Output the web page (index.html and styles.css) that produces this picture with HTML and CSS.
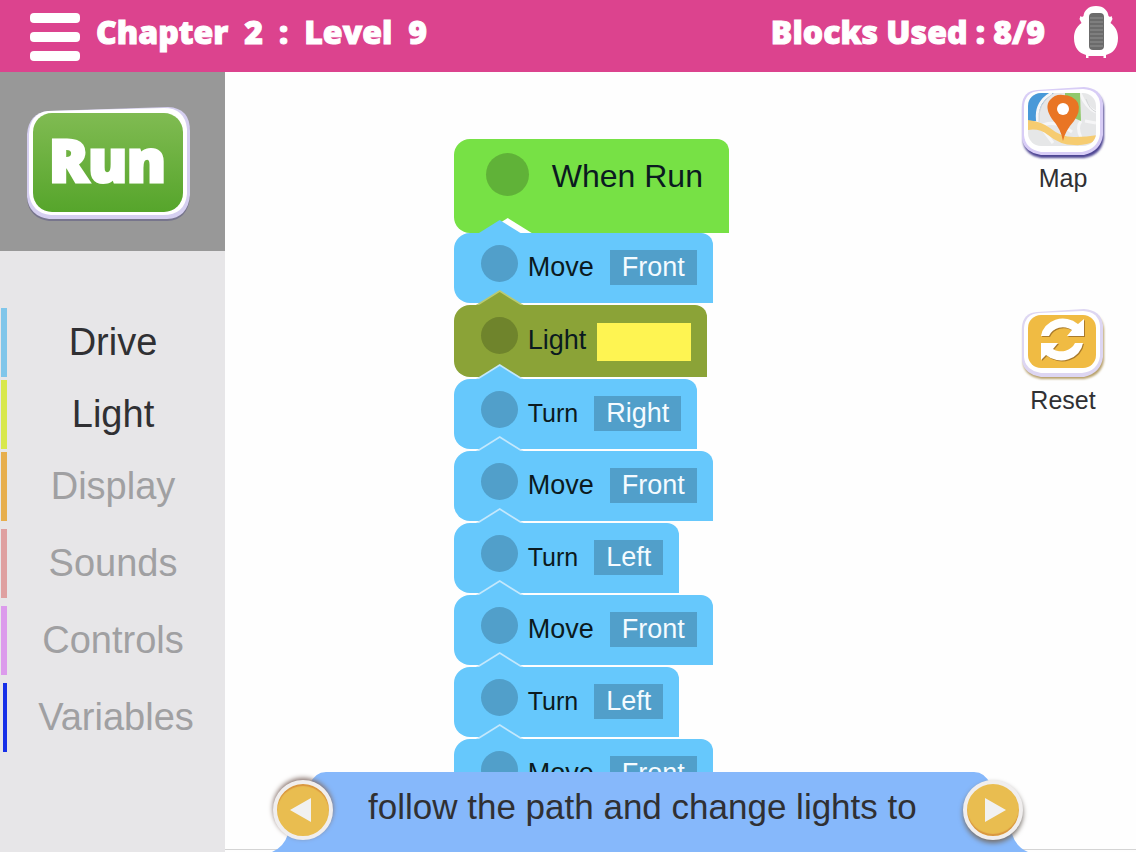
FILE: index.html
```html
<!doctype html>
<html lang="en">
<head>
<meta charset="UTF-8">
<meta name="viewport" content="width=device-width, initial-scale=1">
<title>Chapter 2 : Level 9</title>
<link rel="stylesheet" href="styles.css">
</head>

<body>
	<header class="topbar">
		<button class="menu" type="button" aria-label="Menu">
			<span></span><span></span><span></span>
		</button>
		<h1 class="level"><span>Chapter</span> <span>2</span> <span>:</span> <span>Level</span> <span>9</span></h1>
		<p class="used">Blocks Used : 8/9</p>
		<svg class="robot" viewBox="0 0 46 54" width="46" height="54" aria-hidden="true">
			<path d="M23 1C15 1 11 6 10.500 11L9 12L7.500 11L6.500 14L8.500 18C3 22 1 27 1 33C1 43 6 48 13 50V53H15.500V51H30.500V53H33V50C40 48 45 43 45 33C45 27 43 22 37.500 18L39.500 14L38.500 11L37 12L35.500 11C35 6 31 1 23 1Z" fill="#fff"/>
			<rect x="16" y="8" width="15" height="37" rx="4" fill="#6b6b6b"/>
			<path d="M17 13H30M17 17H30M17 21H30M17 25H30M17 29H30M17 33H30M17 37H30M17 41H30" stroke="#929292"/>
		</svg>
	</header>

	<div class="page">
		<aside class="sidebar">
			<div class="run-area">
				<button class="run" type="button">
					<svg viewBox="0 0 166 116" width="166" height="116" aria-hidden="true">
						<defs>
							<linearGradient id="runGreen" x1="0" y1="0" x2="0" y2="1">
								<stop offset="0" stop-color="#80bb52"/>
								<stop offset="1" stop-color="#56a52b"/>
							</linearGradient>
						</defs>
						<path d="M22 7L142 3Q164 4 164 27V91Q162 114 141 115H23Q3 112 1 93V30Q3 9 22 7Z" fill="#77758c"/>
						<path d="M22 5L142 1Q164 2 164 25V89Q162 112 141 113H23Q3 110 1 91V28Q3 7 22 5Z" fill="#d5cff0"/>
						<path d="M22 5L138 2Q159 2 161 23V88Q159 109 137 109H25Q5 107 3 87V28Q4 7 22 5Z" fill="#fff"/>
						<rect x="7" y="7" width="150" height="99" rx="19" fill="url(#runGreen)"/>
					</svg>
					<span>Run</span>
				</button>
			</div>
			<nav class="categories">
				<button class="category drive" type="button">Drive</button>
				<button class="category light" type="button">Light</button>
				<button class="category display" type="button" disabled>Display</button>
				<button class="category sounds" type="button" disabled>Sounds</button>
				<button class="category controls" type="button" disabled>Controls</button>
				<button class="category variables" type="button" disabled>Variables</button>
			</nav>
		</aside>

		<main class="workspace">
			<div class="canvas">
				<div class="blocks">
					<div class="block start"><span class="dot"></span><span class="name">When Run</span></div>
					<div class="block first"><span class="dot"></span><span class="name">Move</span><button class="value" type="button">Front</button></div>
					<div class="block lamp"><span class="dot"></span><span class="name">Light</span><button class="value" type="button" aria-label="Yellow"></button></div>
					<div class="block turn"><span class="dot"></span><span class="name">Turn</span><button class="value" type="button">Right</button></div>
					<div class="block"><span class="dot"></span><span class="name">Move</span><button class="value" type="button">Front</button></div>
					<div class="block turn"><span class="dot"></span><span class="name">Turn</span><button class="value" type="button">Left</button></div>
					<div class="block"><span class="dot"></span><span class="name">Move</span><button class="value" type="button">Front</button></div>
					<div class="block turn"><span class="dot"></span><span class="name">Turn</span><button class="value" type="button">Left</button></div>
					<div class="block"><span class="dot"></span><span class="name">Move</span><button class="value" type="button">Front</button></div>
				</div>

				<div class="tools">
					<button class="tool" type="button">
						<svg viewBox="0 0 88 76" width="88" height="76" aria-hidden="true">
							<defs>
								<clipPath id="mapArea"><rect x="9" y="8" width="68" height="53" rx="13"/></clipPath>
								<filter id="soft" x="-10%" y="-10%" width="120%" height="130%"><feGaussianBlur stdDeviation="1"/></filter>
							</defs>
							<path d="M18 9L65 5Q84 6 85 23V53Q83 70 65 73H22Q6 70 4 57V24Q5 10 18 9Z" fill="#4e4593" filter="url(#soft)"/>
							<path d="M18 5L65 2Q82 3 84 18V50Q82 66 65 70H22Q5 67 3 54V20Q4 6 18 5Z" fill="#d8cdf6"/>
							<path d="M20 6L64 4Q80 5 81 19V49Q79 64 63 67H22Q6 64 5 50V21Q6 7 20 6Z" fill="#fff"/>
							<g clip-path="url(#mapArea)">
								<path d="M9 8H77V61H9Z" fill="#e6e7e8"/>
								<path d="M9 8H35Q20 17 18 36H9Z" fill="#4999d8"/>
								<path d="M33 8Q15 18 19 38L34 58M61 8Q67 23 77 27M66 36L77 38M62 36Q57 42 62 53M19 43Q34 32 53 47" fill="none" stroke="#f6f6f7" stroke-width="3"/>
								<path d="M35 8Q18 18 20 37M67 14Q70 24 77 27" fill="none" stroke="#d4d6d8" stroke-width="1"/>
								<path d="M46 8H61L62 36Q52 32 46 27Z" fill="#91c96c"/>
								<path d="M9 35Q21 36 31 43Q43 53 57 52Q69 52 78 50V55Q67 61 55 60Q41 60 29 50Q20 43 9 45Z" fill="#f6cc71"/>
							</g>
							<path d="M44 56Q42 44 33 34Q25 22 31 15Q36 9 44 10Q54 10 59 18Q62 26 55 36Q46 46 44 56Z" fill="#e97524"/>
							<circle cx="44" cy="24" r="6" fill="#fff"/>
						</svg>
						<span>Map</span>
					</button>
					<button class="tool" type="button">
						<svg viewBox="0 0 88 76" width="88" height="76" aria-hidden="true">
							<path d="M18 9L65 5Q84 6 85 23V53Q83 69 65 72H22Q6 69 4 57V24Q5 10 18 9Z" fill="#b7a06b" filter="url(#soft)"/>
							<path d="M18 5L65 2Q82 3 84 18V50Q82 66 65 70H22Q5 67 3 54V20Q4 6 18 5Z" fill="#ddd6f2"/>
							<path d="M20 6L64 4Q80 5 81 19V49Q79 64 63 66H22Q6 63 5 50V21Q6 7 20 6Z" fill="#fff"/>
							<rect x="9" y="8" width="68" height="53" rx="13" fill="#f0bb43"/>
							<g transform="translate(1 1)" fill="#a97a2b">
								<path d="M22 29A22 20 0 0 1 59 17L65 12V29H48L53 23A15 14 0 0 0 30 29Z"/>
								<path d="M64 36A22 20 0 0 1 27 48L22 53V36H39L34 42A15 14 0 0 0 56 36Z"/>
							</g>
							<g fill="#fff">
								<path d="M22 29A22 20 0 0 1 59 17L65 12V29H48L53 23A15 14 0 0 0 30 29Z"/>
								<path d="M64 36A22 20 0 0 1 27 48L22 53V36H39L34 42A15 14 0 0 0 56 36Z"/>
							</g>
						</svg>
						<span>Reset</span>
					</button>
				</div>
			</div>

			<footer class="hint">
				<div class="banner">
					<svg class="shoulder" viewBox="0 0 60 80" width="60" height="80" aria-hidden="true">
						<path d="M0 80Q12 75 16 62L37 13Q43 0 54 0H60V80Z" fill="#86b8fb"/>
					</svg>
					<p class="hint-text">follow the path and change lights to</p>
					<svg class="shoulder" viewBox="0 0 60 80" width="60" height="80" aria-hidden="true">
						<path d="M60 80Q48 75 44 62L23 13Q17 0 6 0H0V80Z" fill="#86b8fb"/>
					</svg>
					<button class="arrow previous" type="button" aria-label="Previous hint">
						<svg viewBox="0 0 24 26" width="24" height="26"><path d="M22 1V25L1 13Z" fill="#f1f1f1"/></svg>
					</button>
					<button class="arrow next" type="button" aria-label="Next hint">
						<svg viewBox="0 0 24 26" width="24" height="26"><path d="M2 1V25L23 13Z" fill="#f1f1f1"/></svg>
					</button>
				</div>
			</footer>
		</main>
	</div>
</body>
</html>
```

FILE: styles.css
```css
* {
	box-sizing: border-box;
}
body {
	margin: 0;
	height: 100vh;
	display: flex;
	flex-direction: column;
	overflow: hidden;
	font-family: "Liberation Sans", Arial, sans-serif;
	color: #303033;
	background-color: #fefefe;
}
button {
	border: 0;
	padding: 0;
	background: none;
	font: inherit;
	color: inherit;
	cursor: pointer;
}
svg {
	display: block;
}
h1, p {
	margin: 0;
}

.topbar {
	flex: none;
	display: flex;
	align-items: center;
	height: 72px;
	padding: 0 17px 8px 30px;
	background-color: #dc438e;
	color: #fff;
}
.menu {
	display: grid;
	gap: 9px;
	width: 50px;
	margin: 10px 16px 0 0;
}
.menu span {
	height: 10px;
	border-radius: 4px;
	background-color: #fff;
}
.level, .used {
	font-family: "Open Sans", sans-serif;
	font-size: 32px;
	font-weight: 800;
	line-height: 40px;
	white-space: nowrap;
	-webkit-text-stroke: 1px #fff;
}
.level {
	display: flex;
	gap: 16px;
}
.used {
	margin-left: auto;
}
.robot {
	margin-left: 28px;
}

.page {
	flex: 1;
	display: flex;
	min-height: 0;
}
.sidebar {
	flex: none;
	width: 225px;
	background-color: #e7e6e8;
}
.run-area {
	padding: 34px 0 29px 26px;
	background-color: #989898;
}
.run {
	display: grid;
	place-items: center;
	width: 166px;
	color: #fff;
}
.run svg, .run span {
	grid-area: 1 / 1;
}
.run span {
	padding: 0 3px 8px 0;
	font-family: "Open Sans", sans-serif;
	font-size: 58px;
	font-weight: 800;
	line-height: 60px;
	-webkit-text-stroke: 3px #fff;
}
.categories {
	display: grid;
	gap: 3px;
	padding-top: 57px;
}
.category {
	height: 69px;
	margin-left: 1px;
	border-left: 6px solid;
	padding-right: 6px;
	font-size: 38px;
}
.category:disabled {
	color: #a0a0a2;
	cursor: default;
}
.drive { border-color: #80c6ea; }
.light { border-color: #d8e84c; }
.display { border-color: #e7ae4c; }
.sounds { border-color: #dfa0a0; }
.controls { border-color: #dc9bec; }
.variables {
	margin-left: 3px;
	border-left-width: 4px;
	border-color: #1730e8;
	padding-right: 0;
}
.sounds, .controls, .variables {
	margin-top: 5px;
}

.workspace {
	flex: 1;
	display: flex;
	flex-direction: column;
	min-width: 0;
}
.canvas {
	flex: 1;
	display: flex;
	justify-content: space-between;
	min-height: 0;
	overflow: hidden;
	padding: 13px 29px 0 25%;
}
.blocks {
	display: flex;
	flex-direction: column;
	align-items: flex-start;
	gap: 2px;
	padding: 54px 0 0 1px;
}
.block {
	--fill: #66c8fc;
	--shade: #519fca;
	--edge: #c4e8fc;
	position: relative;
	flex: none;
	display: flex;
	align-items: center;
	height: 70px;
	padding: 0 16px 2px 27px;
	border-radius: 16px 12px 0 16px;
	background-color: var(--fill);
	color: #0b1a20;
	font-size: 27px;
}
/* pointed tab that plugs into the block above */
.block::before, .block::after {
	content: "";
	position: absolute;
	left: 22px;
	top: -15px;
	width: 48px;
	height: 15px;
	clip-path: polygon(50% 0, 100% 100%, 0 100%);
	background-color: var(--edge);
}
.block::after {
	top: -13px;
	background-color: var(--fill);
}
.dot {
	width: 37px;
	height: 37px;
	margin: 0 10px 7px 0;
	border-radius: 50%;
	background-color: var(--shade);
}
.value {
	height: 35px;
	margin-left: 16px;
	padding: 0 12px;
	background-color: var(--shade);
	color: #f4fbff;
}
.turn .name {
	font-size: 25px;
}
.start {
	--fill: #77e145;
	--shade: #60b238;
	height: 94px;
	margin-bottom: -2px;
	padding: 0 26px 20px 32px;
	font-size: 32px;
}
.start::before, .start::after {
	display: none;
}
.start .dot {
	width: 43px;
	height: 43px;
	margin: 0 23px 3px 0;
}
.first {
	--edge: #fff;
}
.first::before {
	left: 30px;
}
.lamp {
	--fill: #8ba337;
	--shade: #6f842c;
	--edge: #b9ca72;
	height: 72px;
}
.lamp .dot {
	margin-bottom: 10px;
}
.lamp .value {
	width: 94px;
	height: 38px;
	margin: 4px 0 0 11px;
	background-color: #fef452;
}

.tools {
	flex: none;
	display: flex;
	flex-direction: column;
	gap: 115px;
	width: 88px;
}
.tool {
	display: grid;
	gap: 3px;
	font-size: 25px;
	line-height: 28px;
}

.hint {
	flex: none;
	padding: 0 108px 0 47px;
	background: linear-gradient(#d4d4d4, #d4d4d4) 0 77px / 100% 1px no-repeat;
}
.banner {
	position: relative;
	display: flex;
	height: 80px;
}
.shoulder {
	flex: none;
}
.hint-text {
	flex: 1;
	padding: 15px 0 0 36px;
	background-color: #86b8fb;
	font-size: 35px;
	line-height: 40px;
	white-space: nowrap;
}
.arrow {
	position: absolute;
	top: 8px;
	display: grid;
	place-items: center;
	width: 60px;
	height: 60px;
	border: 4px solid #f0eeee;
	border-radius: 50%;
	background-color: #e9bd50;
}
.previous {
	left: 1px;
	padding-right: 4px;
	box-shadow: 0 -2px 5px #85706a, inset 0 2px 1px #d99540;
}
.next {
	right: 5px;
	padding-left: 4px;
	box-shadow: 0 3px 5px #77706a, inset 0 -2px 1px #d99540;
}
```
